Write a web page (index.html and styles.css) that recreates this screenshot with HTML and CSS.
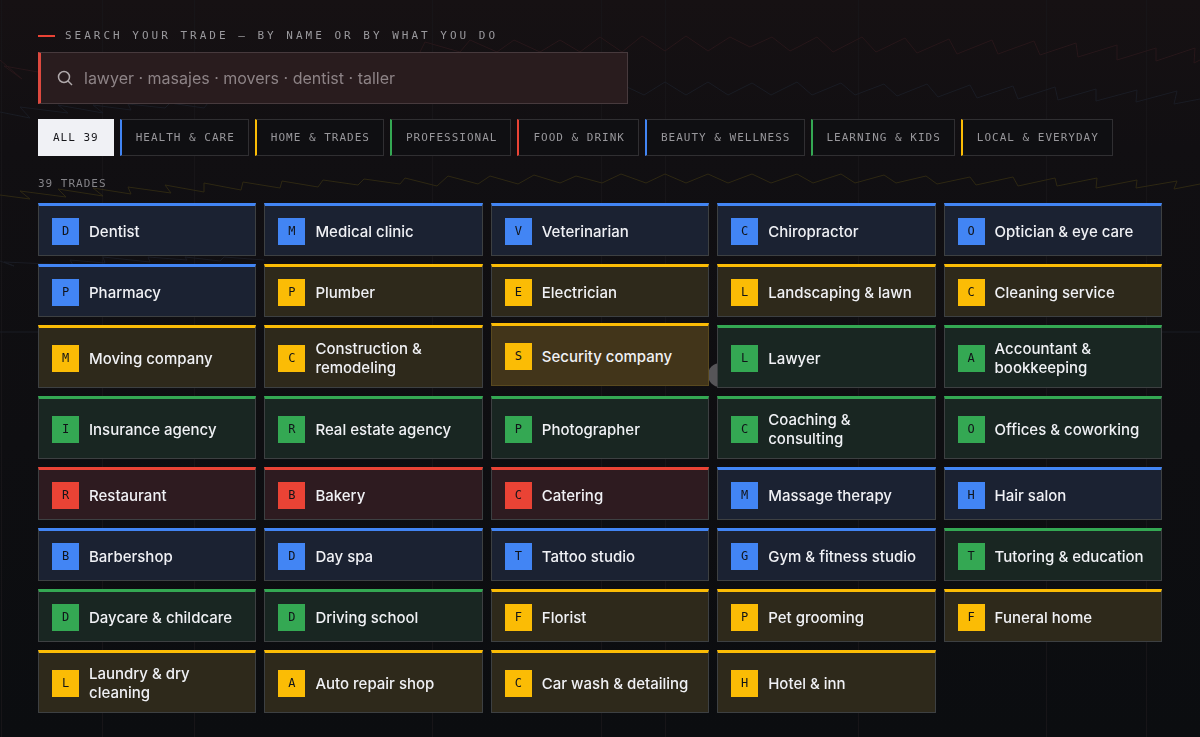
FILE: index.html
```html
<!DOCTYPE html>
<html lang="en">
<head>
    <meta charset="UTF-8">
    <meta name="viewport" content="width=device-width, initial-scale=1.0">
    <title>Search your trade</title>
    <link rel="stylesheet" href="styles.css">
</head>
<body>
    <!-- Background lines -->
    <svg class="backdrop" viewBox="0 0 1200 737" preserveAspectRatio="none" aria-hidden="true">
        <path class="line-grid" d="M1.5 0V737M102.5 0V737M194.5 0V737M432.5 0V737M601.5 0V737M665.5 0V737M858.5 0V737M1046.5 0V737M1146.5 0V737"/>
        <polyline class="line-red" points="420,52 425,42 460,52 470,40 497,52 514,40 540,52 560,40 580,52 600,37 622,52 642,36 665,51 686,36 708,51 730,37 750,47 772,37 790,51 800,46 817,37 833,52 862,37 876,52 905,38 917,53 949,39 957,54 992,40 998,54 1034,41 1040,55 1076,43 1078,57 1117,45 1117,60 1156,48 1156,61 1195,48 1194,63 1200,60"/>
        <polyline class="line-red" points="0,60 22,79 4,66 38,72"/>
        <polyline class="line-blue" points="627,87 644,95 665,82 686,95 708,82 728,95 752,83 771,95 797,82 812,95 841,83 855,95 884,84 897,96 927,84 938,97 970,85 977,98 1013,86 1018,99 1055,87 1058,100 1096,89 1096,101 1137,90 1136,102 1177,91 1174,104 1200,99"/>
        <polyline class="line-blue" points="0,112 30,118 20,107 68,113 58,105 103,113 93,105 131,110 128,104 165,108 170,103 204,108 208,103"/>
        <polyline class="line-yellow" points="0,195 30,199 20,191 66,197 58,189 103,196 93,188 131,194 128,187 171,193 165,185 204,192 204,183 241,190 243,182 280,188 282,181 318,187 323,180 358,185 364,179 400,184 405,178 437,186 448,176 478,184 490,176 518,184 534,175 560,183 576,176 602,183 621,174 646,183 665,174 686,183 708,174 728,183 752,174 771,183 797,174 813,183 841,174 855,183 884,175 896,183 926,176 937,184 970,177 976,185 1013,177 1018,186 1055,178 1057,186 1097,178 1096,188 1137,180 1136,188 1177,181 1174,189 1200,184"/>
        <polyline class="line-blue" points="0,261 14,266 4,262 73,265 70,260 105,263 103,257 150,262 148,257 187,260 185,257 220,261 224,257 264,260"/>
        <path class="line-blue" d="M0 332H38M1162 332H1200"/>
    </svg>
    <span class="pointer" aria-hidden="true"></span>

    <main class="container">
        <!-- Search -->
        <label class="search-label" for="tradeSearch">SEARCH YOUR TRADE — BY NAME OR BY WHAT YOU DO</label>
        <div class="search">
            <svg class="search-icon" viewBox="0 0 16 16" aria-hidden="true">
                <circle cx="7" cy="7" r="5.5"/>
                <path d="M11 11L15 15"/>
            </svg>
            <input type="text" id="tradeSearch" placeholder="lawyer · masajes · movers · dentist · taller">
        </div>

        <!-- Category filters -->
        <div class="filters">
            <button type="button" class="filter active">ALL 39</button>
            <button type="button" class="filter blue">HEALTH &amp; CARE</button>
            <button type="button" class="filter yellow">HOME &amp; TRADES</button>
            <button type="button" class="filter green">PROFESSIONAL</button>
            <button type="button" class="filter red">FOOD &amp; DRINK</button>
            <button type="button" class="filter blue">BEAUTY &amp; WELLNESS</button>
            <button type="button" class="filter green">LEARNING &amp; KIDS</button>
            <button type="button" class="filter yellow">LOCAL &amp; EVERYDAY</button>
        </div>

        <p class="count">39 TRADES</p>

        <!-- Trades -->
        <div class="trades">
            <a href="#" class="trade blue"><span class="badge">D</span><span>Dentist</span></a>
            <a href="#" class="trade blue"><span class="badge">M</span><span>Medical clinic</span></a>
            <a href="#" class="trade blue"><span class="badge">V</span><span>Veterinarian</span></a>
            <a href="#" class="trade blue"><span class="badge">C</span><span>Chiropractor</span></a>
            <a href="#" class="trade blue"><span class="badge">O</span><span>Optician &amp; eye care</span></a>

            <a href="#" class="trade blue"><span class="badge">P</span><span>Pharmacy</span></a>
            <a href="#" class="trade yellow"><span class="badge">P</span><span>Plumber</span></a>
            <a href="#" class="trade yellow"><span class="badge">E</span><span>Electrician</span></a>
            <a href="#" class="trade yellow"><span class="badge">L</span><span>Landscaping &amp; lawn</span></a>
            <a href="#" class="trade yellow"><span class="badge">C</span><span>Cleaning service</span></a>

            <a href="#" class="trade yellow"><span class="badge">M</span><span>Moving company</span></a>
            <a href="#" class="trade yellow"><span class="badge">C</span><span>Construction &amp; remodeling</span></a>
            <a href="#" class="trade yellow raised"><span class="badge">S</span><span>Security company</span></a>
            <a href="#" class="trade green"><span class="badge">L</span><span>Lawyer</span></a>
            <a href="#" class="trade green"><span class="badge">A</span><span>Accountant &amp; bookkeeping</span></a>

            <a href="#" class="trade green"><span class="badge">I</span><span>Insurance agency</span></a>
            <a href="#" class="trade green"><span class="badge">R</span><span>Real estate agency</span></a>
            <a href="#" class="trade green"><span class="badge">P</span><span>Photographer</span></a>
            <a href="#" class="trade green"><span class="badge">C</span><span>Coaching &amp; consulting</span></a>
            <a href="#" class="trade green"><span class="badge">O</span><span>Offices &amp; coworking</span></a>

            <a href="#" class="trade red"><span class="badge">R</span><span>Restaurant</span></a>
            <a href="#" class="trade red"><span class="badge">B</span><span>Bakery</span></a>
            <a href="#" class="trade red"><span class="badge">C</span><span>Catering</span></a>
            <a href="#" class="trade blue"><span class="badge">M</span><span>Massage therapy</span></a>
            <a href="#" class="trade blue"><span class="badge">H</span><span>Hair salon</span></a>

            <a href="#" class="trade blue"><span class="badge">B</span><span>Barbershop</span></a>
            <a href="#" class="trade blue"><span class="badge">D</span><span>Day spa</span></a>
            <a href="#" class="trade blue"><span class="badge">T</span><span>Tattoo studio</span></a>
            <a href="#" class="trade blue"><span class="badge">G</span><span>Gym &amp; fitness studio</span></a>
            <a href="#" class="trade green"><span class="badge">T</span><span>Tutoring &amp; education</span></a>

            <a href="#" class="trade green"><span class="badge">D</span><span>Daycare &amp; childcare</span></a>
            <a href="#" class="trade green"><span class="badge">D</span><span>Driving school</span></a>
            <a href="#" class="trade yellow"><span class="badge">F</span><span>Florist</span></a>
            <a href="#" class="trade yellow"><span class="badge">P</span><span>Pet grooming</span></a>
            <a href="#" class="trade yellow"><span class="badge">F</span><span>Funeral home</span></a>

            <a href="#" class="trade yellow"><span class="badge">L</span><span>Laundry &amp; dry<br>cleaning</span></a>
            <a href="#" class="trade yellow"><span class="badge">A</span><span>Auto repair shop</span></a>
            <a href="#" class="trade yellow"><span class="badge">C</span><span>Car wash &amp; detailing</span></a>
            <a href="#" class="trade yellow"><span class="badge">H</span><span>Hotel &amp; inn</span></a>
        </div>
    </main>
</body>
</html>
```
FILE: styles.css
```css
* {
    box-sizing: border-box;
    margin: 0;
    padding: 0;
}

body {
    min-height: 100vh;
    font-family: Inter, sans-serif;
    color: #f0f1f5;
    background: linear-gradient(#161113, #110f12 20%, #0e0e11 60%, #0b0d10);
}

.backdrop {
    position: fixed;
    inset: 0;
    width: 100%;
    height: 100%;
    fill: none;
    stroke-width: 1;
}

.line-grid {
    stroke: #171518;
}

.line-red {
    stroke: #27171a;
}

.line-blue {
    stroke: #1a1c24;
}

.line-yellow {
    stroke: #2e2813;
}

.pointer {
    position: absolute;
    top: 363px;
    left: 59%;
    width: 24px;
    height: 24px;
    border-radius: 50%;
    background-color: #565558;
}

.container {
    position: relative;
    padding: 29px 38px 24px;
}

/* Accent colors shared by filters and trades */
.blue {
    --accent: #4285f4;
    --fill: #1b2232;
}

.yellow {
    --accent: #fbbc05;
    --fill: #2e291b;
}

.green {
    --accent: #34a853;
    --fill: #192622;
}

.red {
    --accent: #ea4335;
    --fill: #2e1b20;
}

.search-label,
.filter,
.count {
    font-family: "DejaVu Sans Mono", monospace;
    font-size: 11px;
    line-height: 14px;
}

.search-label {
    display: flex;
    align-items: center;
    gap: 10px;
    margin-bottom: 9px;
    letter-spacing: 3px;
    color: #9a999d;
}

.search-label::before {
    content: "";
    width: 17px;
    height: 2px;
    background-color: #ea4335;
}

.search {
    display: flex;
    align-items: center;
    gap: 11px;
    max-width: 590px;
    height: 52px;
    padding: 0 16px;
    border: 1px solid #473a3d;
    border-left: 3px solid #dd493f;
    background-color: #291c1e;
}

.search-icon {
    width: 16px;
    height: 16px;
    fill: none;
    stroke: #b0a9ab;
    stroke-width: 1.5;
}

.search input {
    flex: 1;
    border: none;
    outline: none;
    background: none;
    font-family: inherit;
    font-size: 16px;
    color: #f0f1f5;
}

.search input::placeholder {
    color: #8d8386;
}

.filters {
    display: flex;
    flex-wrap: wrap;
    gap: 6px;
    margin-top: 15px;
}

.filter {
    height: 37px;
    padding: 0 13px 0 14px;
    border: 1px solid #302f32;
    border-left: 2px solid var(--accent);
    background-color: #0f0f12;
    letter-spacing: 1px;
    color: #98979b;
    cursor: pointer;
}

.filter.active {
    padding: 0 14px;
    border: 1px solid #f0f1f5;
    background-color: #f0f1f5;
    color: #17171b;
}

.count {
    margin: 21px 0 12px;
    letter-spacing: 1px;
    color: #858489;
}

.trades {
    display: grid;
    grid-template-columns: repeat(5, 1fr);
    gap: 8px;
}

.trade {
    display: flex;
    align-items: center;
    gap: 10px;
    min-height: 53px;
    padding: 11px 13px 10px;
    border: 1px solid #3d4042;
    border-top: 3px solid var(--accent);
    background-color: var(--fill);
    font-size: 15px;
    font-weight: 500;
    line-height: 19px;
    color: #f0f1f5;
    text-decoration: none;
}

.trade:hover,
.trade.raised {
    transform: translateY(-2px);
}

.trade.raised {
    border-color: var(--accent) #59491f #59491f;
    background-color: #42351a;
}

.badge {
    display: flex;
    flex: none;
    align-items: center;
    justify-content: center;
    width: 27px;
    height: 27px;
    background-color: var(--accent);
    font-family: "DejaVu Sans Mono", monospace;
    font-size: 12px;
    font-weight: 400;
    color: #111419;
}
```
